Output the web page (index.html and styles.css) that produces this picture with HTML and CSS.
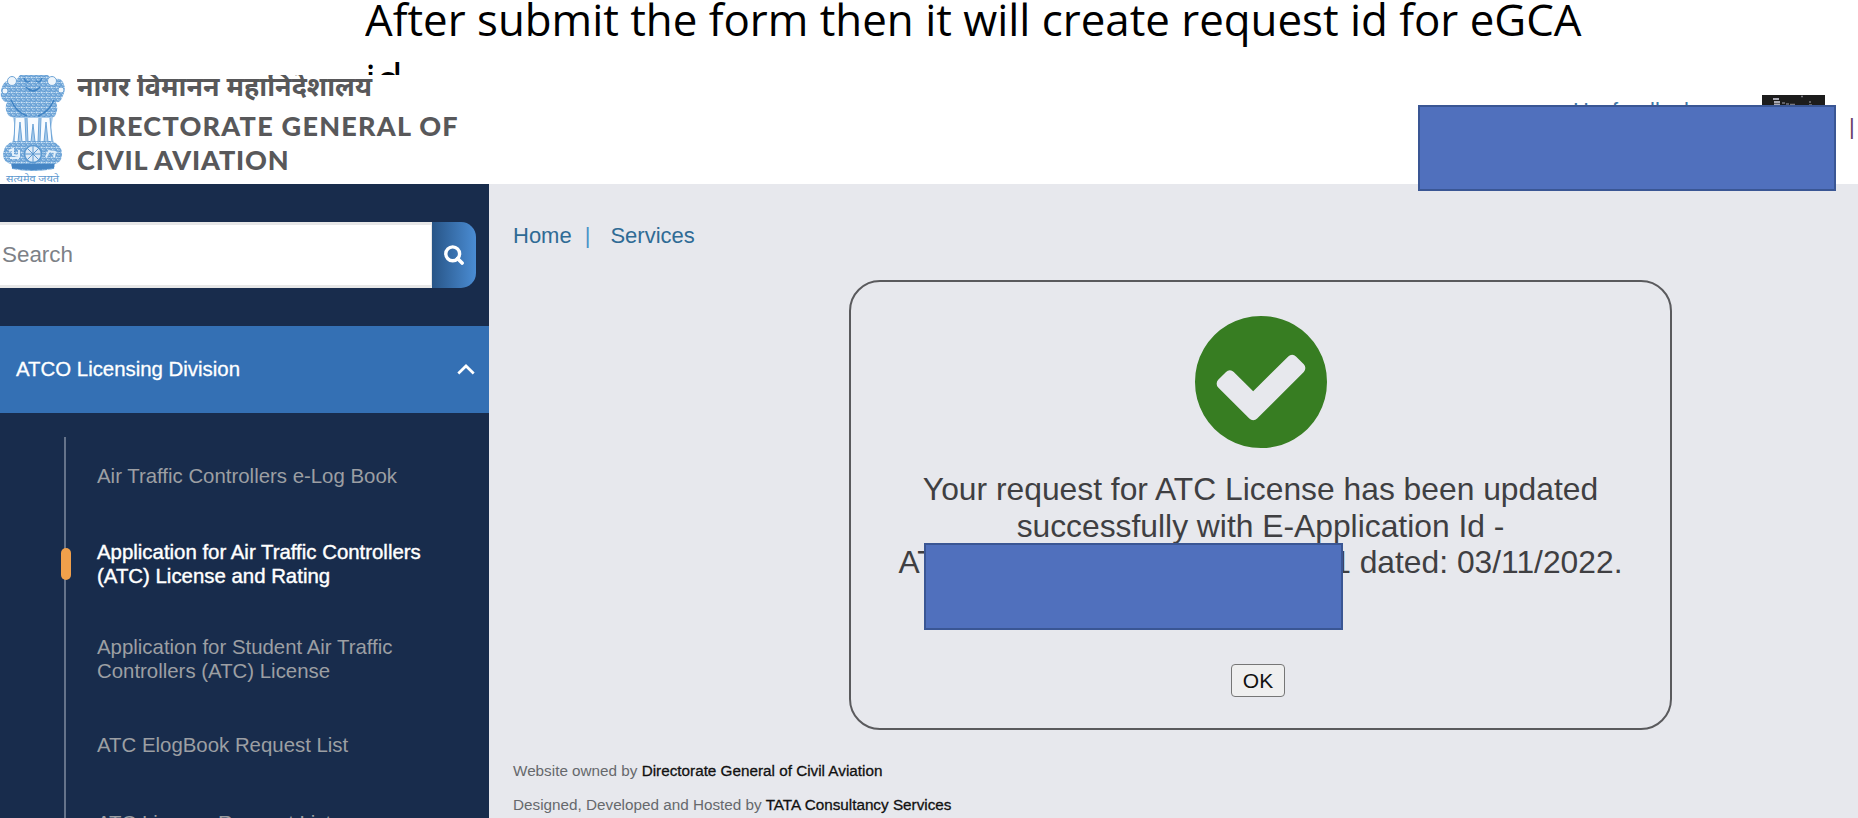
FILE: index.html
```html
<!DOCTYPE html>
<html lang="en">
<head>
<meta charset="utf-8">
<title>DGCA - eGCA Services</title>
<link rel="stylesheet" href="styles.css">
</head>
<body>
<div class="caption">
  <p class="caption-line"><span class="caption-text">After submit the form then it will create request id for eGCA</span></p>
  <p class="caption-line"><span class="caption-text">id</span></p>
</div>

<header class="header">
  <svg class="emblem" viewBox="0 0 66 109" aria-hidden="true">
    <defs>
      <pattern id="grain" width="5" height="5" patternUnits="userSpaceOnUse">
        <rect width="5" height="5" fill="#8ab7e0"/>
        <path d="M0 1.2q1.3-1.4 2.5 0t2.5 0M0 3.8q1.3 1.4 2.5 0t2.5 0" fill="none" stroke="#5795d0" stroke-width=".9"/>
        <path d="M1 2.4h1.4M3.5 2.6h1.2M2 4.9h1" stroke="#e3eff9" stroke-width=".9"/>
      </pattern>
    </defs>
    <path d="M20 0h28l5 6q6-5 10 1 4 8-1 16-2 5-6 4 3 8-1 14-4 4-9 2H17q-6 0-9-3-4-6-1-13-4 0-6-5-1-10 4-15 6-4 9 1z" fill="url(#grain)"/>
    <g fill="#eef5fb" stroke="#6fa5d7" stroke-width="1"><circle cx="12" cy="6" r="4.5"/><circle cx="52" cy="6" r="4.5"/><circle cx="5" cy="16" r="3"/><circle cx="61" cy="15" r="3"/></g>
    <path d="M24 3q2 6 6 3M42 3q-2 6-6 3M26 12q7 8 14 0M28 14q5 3 10 0M11 25q5 12 16 16M54 25q-5 12-16 16" fill="none" stroke="#3f83c4" stroke-width="1.5"/>
    <path d="M13 42h40l-2 11 3 16H12l3-15z" fill="#a9cbea"/>
    <path d="M15 43l-1 24h4l2-20 2 20h4l-1-24M27 43l1 24h3l2-18 2 18h3l1-24M41 43l-1 24h4l2-20 2 20h4l-2-24" fill="#f7fbff" stroke="#6ba3d7" stroke-width="1"/>
    <path d="M14 66h38q10 4 10 13 0 8-7 10l-1 5q-21 4-42 0l-1-5q-8-2-8-10 1-10 11-13z" fill="url(#grain)"/>
    <path d="M12 89h42v4q-21 4-42 0z" fill="#4585c4"/>
    <circle cx="33" cy="79" r="8.5" fill="#dceaf7" stroke="#5b98d0" stroke-width="1.6"/>
    <path d="M33 71v16M25 79h16M27.3 73.3l11.4 11.4M38.7 73.3L27.3 84.7" stroke="#5b98d0" stroke-width="1"/>
    <path d="M9 76l4-2v6l6 1v-6M46 82l3-6 6 1-1 5M10 83h9" fill="none" stroke="#e4f0fa" stroke-width="2"/>
    <text x="6" y="106.5" textLength="53" lengthAdjust="spacingAndGlyphs" class="motto">सत्यमेव जयते</text>
  </svg>
  <div class="brand">
    <div class="brand-hi">नागर विमानन महानिदेशालय</div>
    <div class="brand-en">DIRECTORATE GENERAL OF<br><span class="brand-second">CIVIL AVIATION</span></div>
  </div>
  <div class="header-tools">
    <span class="peek peek-u">H</span><span class="peek peek-f">f</span><span class="peek peek-ll">ll</span><span class="peek peek-k">k</span>
    <svg class="thumb" viewBox="0 0 63 12" aria-hidden="true"><rect width="63" height="12" fill="#1c1c1c"/><path d="M11 4h6M12 7h6M12 9.5h6" stroke="#a9a9b4" stroke-width="1.8"/><path d="M20 8h3M24 9h3M28 9.500h5M39 1.500h2M47 7h2M47 10h3" stroke="#77777f" stroke-width="1.600"/></svg>
    <span class="divider">|</span>
    <div class="redaction redaction-user"></div>
  </div>
</header>

<div class="layout">
  <aside class="sidebar">
    <div class="search">
      <div class="search-input">Search</div>
      <div class="search-button">
        <svg width="20" height="20" viewBox="0 0 20 20"><circle cx="8.7" cy="8.8" r="6.9" fill="none" stroke="#fff" stroke-width="3.4"/><path d="M13.5 13.5l4.6 4.6" stroke="#fff" stroke-width="3.6" stroke-linecap="round"/></svg>
      </div>
    </div>
    <div class="division">
      <span>ATCO Licensing Division</span>
      <svg width="18" height="11" viewBox="0 0 18 11"><path d="M1.3 9.5L9 2l7.7 7.5" fill="none" stroke="#fff" stroke-width="2.7"/></svg>
    </div>
    <nav class="menu">
      <a class="item">Air Traffic Controllers e-Log Book</a>
      <a class="item item-active">Application for Air Traffic Controllers<br>(ATC) License and Rating</a>
      <a class="item item-student">Application for Student Air Traffic<br>Controllers (ATC) License</a>
      <a class="item item-elog">ATC ElogBook Request List</a>
      <a class="item item-last">ATC License Request List</a>
    </nav>
  </aside>

  <main class="content">
    <div class="crumbs"><span>Home</span><span class="crumb-sep">|</span><span>Services</span></div>
    <section class="card">
      <svg class="check" width="154" height="154" viewBox="0 0 1792 1792"><path fill="#377d22" d="M1412 734q0-28-18-46l-91-90q-19-19-45-19t-45 19l-408 407-226-226q-19-19-45-19t-45 19l-91 90q-18 18-18 46 0 27 18 45l362 362q19 19 45 19 27 0 46-19l543-543q18-18 18-45zm252 162q0 209-103 385.500t-279.500 279.500-385.500 103-385.500-103-279.500-279.500-103-385.500 103-385.500 279.500-279.500 385.500-103 385.500 103 279.500 279.500 103 385.500z"/></svg>
      <div class="message">
        <div>Your request for ATC License has been updated</div>
        <div>successfully with E-Application Id -</div>
        <div class="message-id"><span>AT</span><span>1 dated: 03/11/2022.</span></div>
        <div class="redaction redaction-id"></div>
      </div>
      <button class="ok">OK</button>
    </section>
    <footer class="footer">
      <div>Website owned by <b>Directorate General of Civil Aviation</b></div>
      <div>Designed, Developed and Hosted by <b>TATA Consultancy Services</b></div>
    </footer>
  </main>
</div>
</body>
</html>
```
FILE: styles.css
```css
* { box-sizing: border-box; }
body {
  margin: 0;
  width: 1858px;
  height: 818px;
  overflow: hidden;
  background: #fff;
  font-family: "Liberation Sans", Arial, sans-serif;
}
.caption {
  height: 75px;
  overflow: hidden;
  padding-left: 365px;
  color: #000;
  font-family: "Open Sans", "Noto Sans", sans-serif;
  font-size: 44.5px;
}
.caption-line { margin: 0; height: 60px; line-height: 38px; white-space: nowrap; }
.caption-text { display: inline-block; transform-origin: 0 50%; transform: scaleX(.985); }

.header { display: flex; height: 109px; background: #fff; position: relative; }
.emblem { width: 66px; height: 109px; flex: none; }
.motto { font: 9px "Noto Sans Devanagari", "Noto Sans", sans-serif; fill: #5b97cf; }
.brand { margin-left: 11px; color: #58585a; font-weight: 700; white-space: nowrap; }
.brand-hi { height: 29px; overflow: hidden; font: 700 26.9px/29px "Noto Sans Devanagari", "Noto Sans", sans-serif; }
.brand-en { padding-top: 5px; font: 900 27px/33.5px Lato, sans-serif; letter-spacing: 1.25px; }
.brand-second { letter-spacing: .85px; }
.redaction { position: absolute; background: #5070bd; border: 2px solid #3a5694; }
.redaction-user { left: 1418px; top: 30px; width: 418px; height: 86px; z-index: 2; }
.peek { position: absolute; top: 23px; font-size: 22px; line-height: 25px; color: #3c77a8; }
.peek-u { left: 1573px; }
.peek-f { left: 1612px; }
.peek-ll { left: 1650px; }
.peek-k { left: 1684px; }
.thumb { position: absolute; left: 1762px; top: 20px; width: 63px; height: 12px; }
.divider { position: absolute; left: 1849px; top: 38px; font-size: 22px; line-height: 28px; color: #6a4069; }

.layout { display: flex; height: 634px; }
.sidebar { width: 489px; flex: none; background: #182c4c; overflow: hidden; }
.search { display: flex; margin-top: 38px; height: 66px; width: 476px; }
.search-input { width: 432px; background: #fff; border: solid #e7e7e7; border-width: 3px 1px 3px 0; padding-left: 2px; font-size: 22.4px; line-height: 60px; color: #7d8187; }
.search-button { flex: 1; display: flex; align-items: center; justify-content: center; background: linear-gradient(90deg, #285587, #4a8cd3); border-radius: 0 15px 15px 0; }
.division { margin-top: 38px; height: 87px; padding: 0 14px 1px 16px; display: flex; align-items: center; justify-content: space-between; background: #3470b4; color: #fff; font-size: 20.4px; -webkit-text-stroke: .3px #fff; }
.menu { position: relative; margin: 24px 0 0 64px; height: 400px; border-left: 2px solid #65738a; padding-left: 31px; font-size: 20.4px; line-height: 24px; color: #9c9fa3; white-space: nowrap; }
.item { display: block; padding-top: 27px; }
.item-active { position: relative; padding-top: 52px; color: #fff; -webkit-text-stroke: .4px #fff; }
.item-active::before { content: ""; position: absolute; left: -36px; top: 60px; width: 10px; height: 32px; border-radius: 5px; background: #f0a04b; }
.item-student { padding-top: 47px; }
.item-elog { padding-top: 50px; }
.item-last { padding-top: 54px; }

.content { flex: 1; background: #e7e8ed; padding-left: 24px; }
.crumbs { display: flex; padding-top: 39px; height: 96px; font-size: 22px; line-height: 26px; color: #2f6b95; }
.crumb-sep { margin: 0 20px 0 13px; color: #4a94c8; }
.card { width: 823px; height: 450px; margin-left: 336px; padding-top: 23px; border: 2px solid #5a5a5d; border-radius: 31px; display: flex; flex-direction: column; align-items: center; }
.message { position: relative; width: 724px; margin-top: 12px; text-align: center; font-size: 31.8px; line-height: 36.7px; color: #3f3f42; white-space: nowrap; }
.message-id { display: flex; justify-content: space-between; }
.redaction-id { left: 25px; top: 72px; width: 419px; height: 87px; }
.ok { margin: 83px 5px 0 0; width: 54px; height: 33px; padding: 0; border: 1.5px solid #767676; border-radius: 4px; background: #efefef; color: #111; font: 21px "Liberation Sans", Arial, sans-serif; }
.footer { padding-top: 24px; font-size: 15.28px; line-height: 33.5px; color: #66686c; white-space: nowrap; }
.footer b { font-weight: 400; color: #111; -webkit-text-stroke: .3px #111; }
```
